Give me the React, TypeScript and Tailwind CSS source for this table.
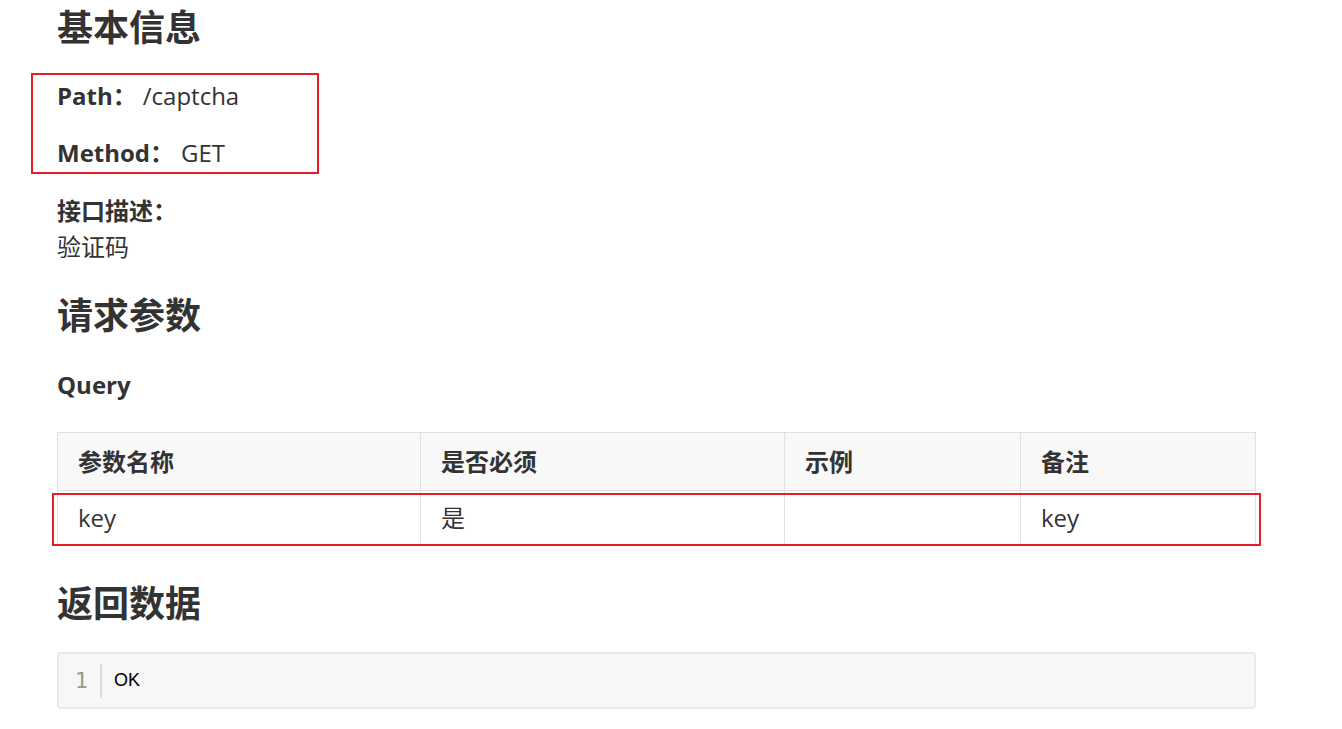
import React from "react";

const font = "font-['Open_Sans','Noto_Sans_CJK_SC',sans-serif]";

const Heading = ({ children }: { children: React.ReactNode }) => (
  <h2 className="h-[40px] text-[36px] font-bold leading-[40px] text-[#333]">{children}</h2>
);

const App = () => {
  return (
    <div className={`min-h-[729px] w-[1342px] bg-white text-[24px] text-[#333] ${font}`}>
      <div className="ml-[57px] w-[1199px] pt-[8px]">
        <Heading>基本信息</Heading>

        {/* annotated box */}
        <div className="-ml-[26px] mt-[25px] w-[288px] border-2 border-[#e41f28] pb-[1px] pl-[24px] pt-[3px]">
          <p className="leading-[36px]">
            <b>Path：</b>
            <span className="ml-[6px]">/captcha</span>
          </p>
          <p className="mt-[21px] leading-[36px]">
            <b>Method：</b>
            <span className="ml-[7px]">GET</span>
          </p>
        </div>

        <p className="mt-[19px] font-bold leading-[36px]">接口描述：</p>
        <p className="leading-[36px]">验证码</p>

        <div className="mt-[31px]">
          <Heading>请求参数</Heading>
        </div>

        <p className="mt-[31px] font-bold leading-[36px]">Query</p>

        <div className="relative mt-[29px]">
          <table className="w-full border-collapse">
            <thead>
              <tr className="h-[58px] bg-[#f8f8f8]">
                <th className="w-[363px] border border-[#dfe2e5] px-[20px] text-left font-bold">参数名称</th>
                <th className="w-[364px] border border-[#dfe2e5] px-[20px] text-left font-bold">是否必须</th>
                <th className="w-[236px] border border-[#dfe2e5] px-[20px] text-left font-bold">示例</th>
                <th className="border border-[#dfe2e5] px-[20px] text-left font-bold">备注</th>
              </tr>
            </thead>
            <tbody>
              <tr className="h-[55px]">
                <td className="border border-[#dfe2e5] px-[20px]">key</td>
                <td className="border border-[#dfe2e5] px-[20px]">是</td>
                <td className="border border-[#dfe2e5] px-[20px]"></td>
                <td className="border border-[#dfe2e5] px-[20px]">key</td>
              </tr>
            </tbody>
          </table>
          <div className="pointer-events-none absolute left-[-5px] top-[61px] h-[53px] w-[1209px] border-2 border-[#e41f28]" />
        </div>

        <div className="mt-[38px]">
          <Heading>返回数据</Heading>
        </div>

        <div className="mt-[28px] flex h-[57px] items-center rounded-[4px] border-2 border-[#e7eaed] bg-[#f7f7f7]">
          <span className="w-[29px] text-right font-['DejaVu_Sans_Mono',monospace] text-[22px] leading-none text-[#999a8c]">1</span>
          <span className="ml-[12px] h-[34px] w-[2px] bg-[#ddd]" />
          <span className="ml-[12px] font-['Liberation_Sans',sans-serif] text-[18px] text-black">OK</span>
        </div>
      </div>
    </div>
  );
};

export default App;
